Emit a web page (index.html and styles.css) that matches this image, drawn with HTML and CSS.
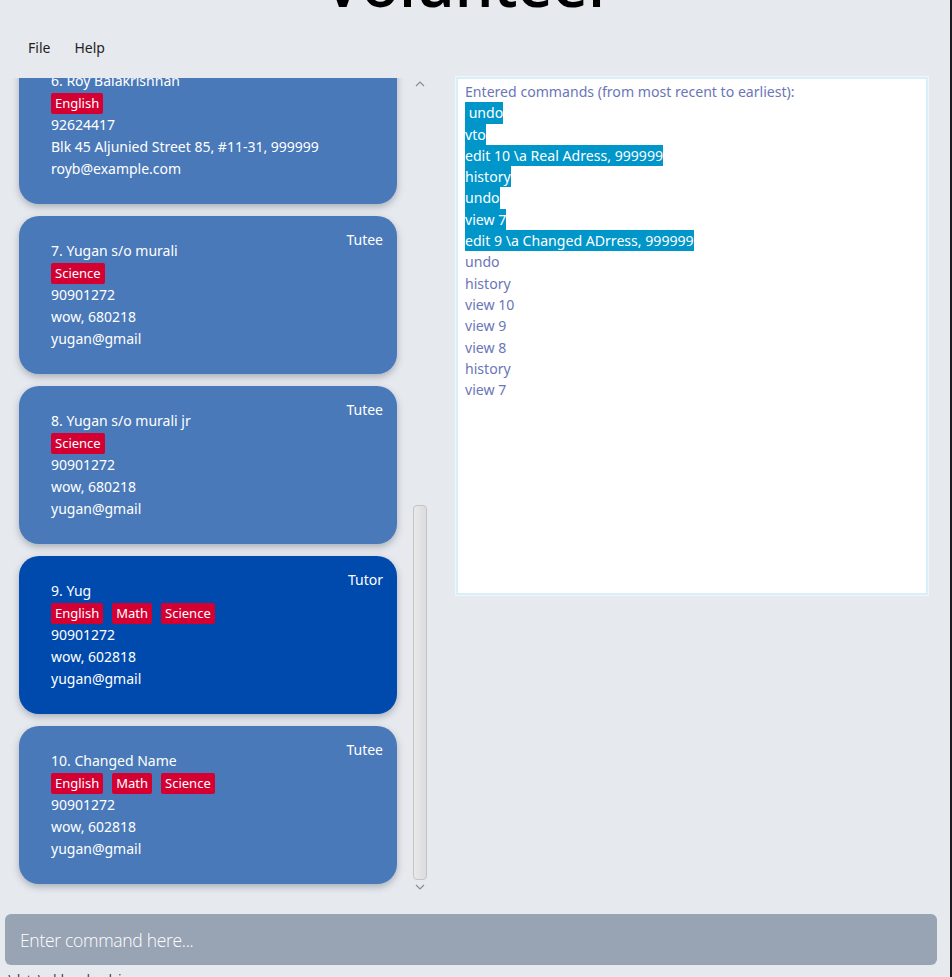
FILE: index.html
```html
<!DOCTYPE html>
<html lang="en">
<head>
<meta charset="utf-8">
<title>Volunteer</title>
<link rel="stylesheet" href="styles.css">
</head>
<body>
<div class="window">
  <div class="title-bar"><h1 class="title">Volunteer</h1></div>
  <nav class="menubar">
    <span class="menu-item">File</span>
    <span class="menu-item">Help</span>
  </nav>
  <main class="main">
    <section class="list-pane">
      <div class="list-viewport">
        <div class="list">
          <article class="card">
            <div class="info">
              <div class="line">6. Roy Balakrishnan</div>
              <div class="tags"><span class="tag">English</span></div>
              <div class="line">92624417</div>
              <div class="line">Blk 45 Aljunied Street 85, #11-31, 999999</div>
              <div class="line">royb@example.com</div>
            </div>
            <div class="role"></div>
          </article>
          <article class="card">
            <div class="info">
              <div class="line">7. Yugan s/o murali</div>
              <div class="tags"><span class="tag">Science</span></div>
              <div class="line">90901272</div>
              <div class="line">wow, 680218</div>
              <div class="line">yugan@gmail</div>
            </div>
            <div class="role">Tutee</div>
          </article>
          <article class="card">
            <div class="info">
              <div class="line">8. Yugan s/o murali jr</div>
              <div class="tags"><span class="tag">Science</span></div>
              <div class="line">90901272</div>
              <div class="line">wow, 680218</div>
              <div class="line">yugan@gmail</div>
            </div>
            <div class="role">Tutee</div>
          </article>
          <article class="card selected">
            <div class="info">
              <div class="line">9. Yug</div>
              <div class="tags"><span class="tag">English</span><span class="tag">Math</span><span class="tag">Science</span></div>
              <div class="line">90901272</div>
              <div class="line">wow, 602818</div>
              <div class="line">yugan@gmail</div>
            </div>
            <div class="role">Tutor</div>
          </article>
          <article class="card">
            <div class="info">
              <div class="line">10. Changed Name</div>
              <div class="tags"><span class="tag">English</span><span class="tag">Math</span><span class="tag">Science</span></div>
              <div class="line">90901272</div>
              <div class="line">wow, 602818</div>
              <div class="line">yugan@gmail</div>
            </div>
            <div class="role">Tutee</div>
          </article>
        </div>
      </div>
      <div class="scrollbar">
        <svg class="arrow" width="10" height="6" viewBox="0 0 10 6"><path d="M1 5 L5 1 L9 5" fill="none" stroke="#8a8f97" stroke-width="1.2"/></svg>
        <div class="track"><div class="thumb"></div></div>
        <svg class="arrow" width="10" height="6" viewBox="0 0 10 6"><path d="M1 1 L5 5 L9 1" fill="none" stroke="#8a8f97" stroke-width="1.2"/></svg>
      </div>
    </section>
    <section class="history-pane">
      <div class="history">
        <div class="hline">Entered commands (from most recent to earliest):</div>
        <div class="hline"><span class="sel">&nbsp;undo</span></div>
        <div class="hline"><span class="sel">vto</span></div>
        <div class="hline"><span class="sel">edit 10 \a Real Adress, 999999</span></div>
        <div class="hline"><span class="sel">history</span></div>
        <div class="hline"><span class="sel">undo</span></div>
        <div class="hline"><span class="sel">view 7</span></div>
        <div class="hline"><span class="sel">edit 9 \a Changed ADrress, 999999</span></div>
        <div class="hline">undo</div>
        <div class="hline">history</div>
        <div class="hline">view 10</div>
        <div class="hline">view 9</div>
        <div class="hline">view 8</div>
        <div class="hline">history</div>
        <div class="hline">view 7</div>
      </div>
    </section>
  </main>
  <div class="command">
    <input class="command-input" type="text" placeholder="Enter command here...">
  </div>
  <div class="status">.\data\addressbook.json</div>
</div>
</body>
</html>
```

FILE: styles.css
```css
* { box-sizing: border-box; }

html, body {
  margin: 0;
  padding: 0;
  background: #e6e9ee;
}

.window {
  width: 952px;
  height: 977px;
  overflow: hidden;
  display: flex;
  flex-direction: column;
  border-right: 2px solid #1d1d1f;
  font-family: "Noto Sans", "Open Sans", sans-serif;
}

.title-bar {
  height: 28px;
  overflow: hidden;
  flex: none;
}

.title {
  margin: -45px 0 0 0;
  font-family: "Open Sans", sans-serif;
  font-weight: 600;
  font-size: 61px;
  line-height: 58px;
  text-align: center;
  color: #000;
  padding-right: 12px;
}

.menubar {
  height: 38px;
  flex: none;
  display: flex;
  align-items: center;
  gap: 24px;
  padding-left: 28px;
  font-size: 14px;
  color: #1f1f1f;
}

.main {
  margin-top: 12px;
  height: 827px;
  flex: none;
  display: flex;
}

.list-pane {
  width: 440px;
  flex: none;
  display: flex;
}

.list-viewport {
  width: 405px;
  overflow: hidden;
  height: 100%;
}

.list {
  margin-top: -32px;
  padding: 0 0 0 19px;
  display: flex;
  flex-direction: column;
  gap: 12px;
}

.card {
  width: 378px;
  height: 158px;
  border-radius: 20px;
  background: #4979b9;
  box-shadow: 0 3px 7px rgba(60, 70, 90, 0.35);
  color: #fff;
  display: flex;
  padding: 13px 14px 0 32px;
  font-size: 14px;
}

.card.selected {
  background: #004aad;
}

.info {
  flex: 1;
  margin-top: 11px;
}

.line {
  height: 22px;
  line-height: 22px;
  white-space: nowrap;
}

.tags {
  height: 22px;
  display: flex;
  align-items: center;
  gap: 9px;
}

.tag {
  background: #d50032;
  color: #fff;
  border-radius: 2px;
  height: 21px;
  line-height: 21px;
  padding: 0 4px;
  font-size: 13px;
}

.role {
  line-height: 22px;
  height: 22px;
  white-space: nowrap;
}

.scrollbar {
  width: 30px;
  display: flex;
  flex-direction: column;
  align-items: center;
  padding: 3px 0 15px 0;
}

.arrow {
  flex: none;
}

.track {
  flex: 1;
  width: 100%;
  display: flex;
  justify-content: center;
  padding-top: 418px;
  padding-bottom: 4px;
}

.thumb {
  width: 14px;
  height: 100%;
  border: 1px solid #c2c4c8;
  border-radius: 4px;
  background: linear-gradient(to right, #e9e9ea, #dcdcde);
}

.history-pane {
  flex: 1;
  padding-left: 16px;
  padding-right: 22px;
}

.history {
  height: 518px;
  margin-top: -1px;
  background: #fff;
  border: 2px solid #d8eef8;
  box-shadow: 0 0 0 1px #eef6fa;
  padding: 2px 7px;
  font-size: 14.1px;
  color: #6b76b7;
}

.hline {
  height: 21.3px;
  line-height: 21.3px;
  white-space: pre;
}

.sel {
  background: #0096c9;
  color: #fff;
  display: inline-block;
  height: 21.3px;
}

.command {
  flex: none;
  margin: 9px 13px 0 5px;
}

.command-input {
  width: 100%;
  height: 51px;
  border: none;
  outline: none;
  border-radius: 6px;
  background: #98a3b4;
  padding: 0 15px;
  font-family: "Open Sans", sans-serif;
  font-weight: 300;
  font-size: 17.5px;
  color: #fff;
  display: block;
}

.command-input::placeholder {
  color: #fff;
  opacity: 1;
  letter-spacing: -0.3px;
}

.status {
  margin-top: 6px;
  padding-left: 5px;
  font-size: 12px;
  color: #333;
}
```
